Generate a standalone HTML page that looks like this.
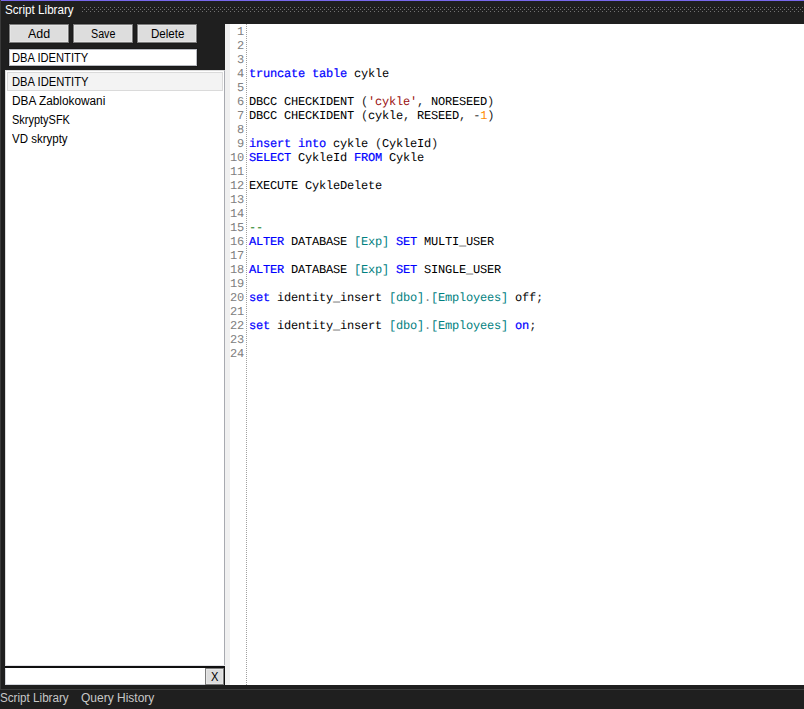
<!DOCTYPE html>
<html><head><meta charset="utf-8">
<style>
*{margin:0;padding:0;box-sizing:border-box}
html,body{width:804px;height:709px;overflow:hidden;background:#1f1f1f;font-family:"Liberation Sans",sans-serif;font-size:12px}
.a{position:absolute}
#leftline{left:0;top:0;width:1px;height:689px;background:#3a3a3a}
#topline{left:1px;top:0;width:803px;height:1px;background:#7868ec}
#dots{left:82px;top:7px;width:722px;height:5px;
 background-image:radial-gradient(circle at 0.5px 0.5px,#5e5e5e 0.7px,transparent 0.75px),radial-gradient(circle at 0.5px 0.5px,#5e5e5e 0.7px,transparent 0.75px);
}
.btn{height:19px;width:60px;top:24px;background:#dddddd;border:1px solid #7c7c7c;box-shadow:inset 1px 1px 0 #e5e5e5,inset -1px -1px 0 #e5e5e5,0 0 0 1px #1b1b1b;color:#000;text-align:center;line-height:18px}
#tb{left:9px;top:49px;width:188px;height:17px;background:#fff;border:1px solid #b9bbc1;box-shadow:0 0 0 1px #191919;color:#000;line-height:15px;padding-left:3px;white-space:nowrap}
#list{left:5px;top:70px;width:220px;height:595px;background:#fff;border:1px solid #dcdcdc;border-bottom:0;border-right-color:#a8aab0}
#sel{left:7px;top:72px;width:216px;height:19px;background:#f3f3f3;border:1px solid #dadada}
.li{left:12px;color:#000;white-space:nowrap;line-height:14px}
#sep{left:5px;top:666px;width:220px;height:2px;background:#101010}
#lbb{left:5px;top:665px;width:220px;height:1px;background:#e2e2e6}
#tb2{left:5px;top:668px;width:200px;height:17px;background:#fff;border:1px solid #d4d6dc;border-top-color:#fff;border-right:0}
#xb{left:205px;top:668px;width:19px;height:17px;background:#dddddd;border:1px solid #7c7c7c;box-shadow:inset 1px 1px 0 #e6e6e6,inset -1px -1px 0 #e6e6e6;text-align:center;line-height:16px;color:#000;padding-left:0px}
#xr{left:224px;top:666px;width:1px;height:19px;background:#101010}
#ed{left:225px;top:24px;width:579px;height:661px;background:#fff}
#gut{left:225px;top:24px;width:5px;height:661px;background:#f0f0f0}
#dl{left:246px;top:24px;width:1px;height:661px;background-image:linear-gradient(#a0a0a0 50%,transparent 50%);background-size:1px 2px}
#nums{left:200px;width:44px;text-align:right;top:25px;text-rendering:geometricPrecision;font-family:"Liberation Mono",monospace;font-size:12px;letter-spacing:-0.2px;line-height:14px;white-space:pre;color:#808080}
#code{left:249px;top:25px;text-rendering:geometricPrecision;font-family:"Liberation Mono",monospace;font-size:12px;letter-spacing:-0.2px;line-height:14px;white-space:pre;color:#000}
.ln{display:inline-block;width:14px;text-align:right;color:#6f6f6f}
.k{color:#0000ff;-webkit-text-stroke:0.2px #0000ff}.s{color:#9a1010}.n{color:#ff8c00}.b{color:#008080}.g{color:#808080}.c{color:#007000}.p{color:#202020}
#bline{left:0;top:689px;width:804px;height:1px;background:#3c3c3c}
#bbar{left:0;top:690px;width:804px;height:19px;background:#1f1f1f}
.tab{top:691px;color:#c8c8c8;white-space:nowrap;line-height:14px}
.t{position:absolute;white-space:nowrap;line-height:14px;transform-origin:0 0;color:#000}
</style></head><body>
<div class="a" id="leftline"></div>
<div class="a" id="topline"></div>
<div class="t" style="left:5.0px;top:3px;transform:scaleX(0.9718);color:#fff;">Script Library</div>
<svg class="a" style="left:82px;top:7px" width="722" height="5"><defs><pattern id="dp" width="4" height="4" patternUnits="userSpaceOnUse"><rect x="0" y="0" width="1" height="1" fill="#727272"/><rect x="2" y="2" width="1" height="1" fill="#727272"/></pattern></defs><rect width="722" height="5" fill="url(#dp)"/></svg>
<div class="a btn" style="left:9px"></div><div class="t" style="left:27.9px;top:27px;transform:scaleX(1.0381);">Add</div>
<div class="a btn" style="left:73px"></div><div class="t" style="left:91.1px;top:27px;transform:scaleX(0.8926);">Save</div>
<div class="a btn" style="left:137px"></div><div class="t" style="left:151px;top:27px;transform:scaleX(0.9647);">Delete</div>
<div class="a" id="tb"></div><div class="t" style="left:11.77px;top:51px;transform:scaleX(0.9296);">DBA IDENTITY</div>
<div class="a" id="list"></div>
<div class="a" id="sel"></div>
<div class="t" style="left:12.3px;top:75px;transform:scaleX(0.9333);">DBA IDENTITY</div>
<div class="t" style="left:11.6px;top:94px;transform:scaleX(0.985);">DBA Zablokowani</div>
<div class="t" style="left:12.4px;top:113px;transform:scaleX(0.9143);">SkryptySFK</div>
<div class="t" style="left:12.4px;top:132px;transform:scaleX(0.9586);">VD skrypty</div>
<div class="a" id="lbb"></div><div class="a" id="sep"></div>
<div class="a" id="tb2"></div>
<div class="a" id="xb"></div><div class="t" style="left:210.8px;top:670px;transform:scaleX(0.925);">X</div><div class="a" id="xr"></div>
<div class="a" id="ed"></div>
<div class="a" id="gut"></div>
<div class="a" id="dl"></div>
<div class="a" id="nums">1
2
3
4
5
6
7
8
9
10
11
12
13
14
15
16
17
18
19
20
21
22
23
24</div>
<div class="a" id="code">


<span class="k">truncate</span> <span class="k">table</span> cykle

DBCC CHECKIDENT <span class="p">(</span><span class="s">'cykle'</span><span class="p">,</span> NORESEED<span class="p">)</span>
DBCC CHECKIDENT <span class="p">(</span>cykle<span class="p">,</span> RESEED<span class="p">,</span> <span class="p">-</span><span class="n">1</span><span class="p">)</span>

<span class="k">insert</span> <span class="k">into</span> cykle <span class="p">(</span>CykleId<span class="p">)</span>
<span class="k">SELECT</span> CykleId <span class="k">FROM</span> Cykle

EXECUTE CykleDelete


<span class="c">--</span>
<span class="k">ALTER</span> DATABASE <span class="b">[Exp]</span> <span class="k">SET</span> MULTI_USER

<span class="k">ALTER</span> DATABASE <span class="b">[Exp]</span> <span class="k">SET</span> SINGLE_USER

<span class="k">set</span> identity_insert <span class="b">[dbo]</span><span class="g">.</span><span class="b">[Employees]</span> off<span class="p">;</span>

<span class="k">set</span> identity_insert <span class="b">[dbo]</span><span class="g">.</span><span class="b">[Employees]</span> <span class="k">on</span><span class="p">;</span>

</div>
<div class="a" id="bline"></div>
<div class="a" id="bbar"></div>
<div class="t" style="left:0.0px;top:691px;transform:scaleX(0.9718);color:#c8c8c8;">Script Library</div>
<div class="t" style="left:81.0px;top:691px;transform:scaleX(1.0);color:#c8c8c8;">Query History</div>
</body></html>
